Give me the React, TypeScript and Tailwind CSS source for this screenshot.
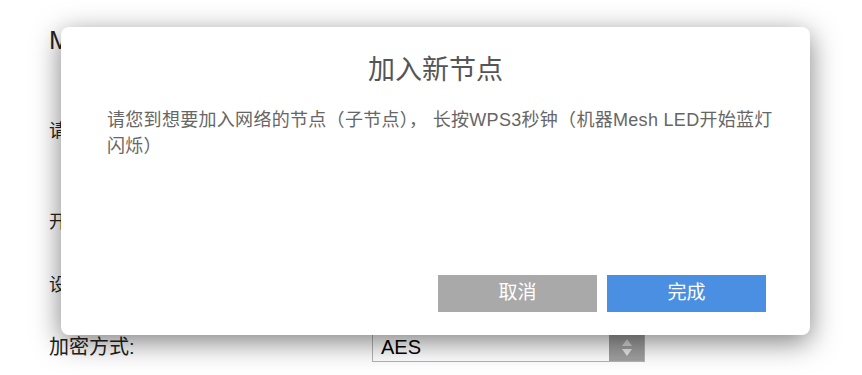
const CJK = '"Liberation Sans", "Noto Sans CJK SC", sans-serif';

function AddNodeDialog() {
  return (
    <div className="absolute left-[61px] top-[27px] flex h-[308px] w-[749px] flex-col rounded-[8px] bg-white shadow-[0_7px_28px_rgba(0,0,0,0.5)]">
      <h2 className="mt-[24px] text-center text-[27px] leading-[38px] text-[#555]">加入新节点</h2>
      <p className="ml-[46px] mt-[18px] w-[670px] text-[18px] leading-[26px] tracking-[0.3px] text-[#666]">
        请您到想要加入网络的节点（子节点）， 长按WPS3秒钟（机器Mesh LED开始蓝灯闪烁）
      </p>
      <div className="mt-auto flex justify-end gap-[10px] pb-[23px] pr-[44px]">
        <button className="h-[37px] w-[159px] bg-[#a9a9a9] text-[19px] text-white">取消</button>
        <button className="h-[37px] w-[159px] bg-[#4a8fe2] text-[19px] text-white">完成</button>
      </div>
    </div>
  );
}

export default function App() {
  return (
    <div className="relative h-[375px] w-full overflow-hidden bg-white" style={{ fontFamily: CJK }}>
      {/* page behind the dialog */}
      <div className="flex flex-col pl-[49px] pt-[22px] text-[#222]">
        <div className="text-[26px] leading-[36px]">Mesh</div>
        <div className="mt-[60px] text-[18px] leading-[26px]">请选择</div>
        <div className="mt-[65px] text-[18px] leading-[26px]">开启</div>
        <div className="mt-[37px] text-[18px] leading-[26px]">设置</div>
        <div className="mt-[35px] flex items-center">
          <span className="w-[323px] text-[20px] leading-[29px]">加密方式:</span>
          <div className="flex h-[29px] w-[273px] border border-[#b5b5b5] bg-white">
            <span className="flex-1 pl-[8px] text-[20px] leading-[27px] text-black">AES</span>
            <div className="flex w-[35px] flex-col items-center justify-center gap-[3px] bg-[#a0a0a0]">
              <svg width="10" height="7" viewBox="0 0 10 7"><path d="M5 0L10 7H0Z" fill="#d8d8d8" /></svg>
              <svg width="10" height="7" viewBox="0 0 10 7"><path d="M0 0H10L5 7Z" fill="#e8e8e8" /></svg>
            </div>
          </div>
        </div>
      </div>
      <AddNodeDialog />
    </div>
  );
}
